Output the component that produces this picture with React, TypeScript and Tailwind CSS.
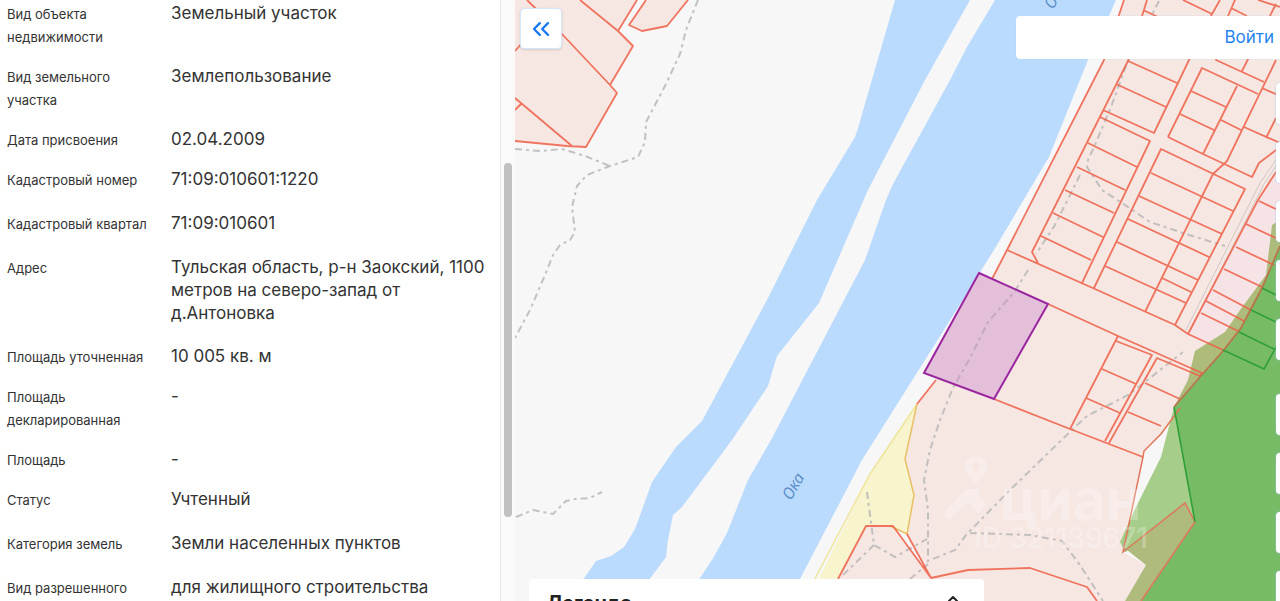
import { useState } from "react";
import { ChevronUp, ChevronsLeft } from "lucide-react";

interface Attribute {
  label: string;
  value: string;
  copyable?: boolean;
}

const attributes: Attribute[] = [
  { label: "Вид объекта недвижимости", value: "Земельный участок" },
  { label: "Вид земельного участка", value: "Землепользование" },
  { label: "Дата присвоения", value: "02.04.2009" },
  { label: "Кадастровый номер", value: "71:09:010601:1220", copyable: true },
  { label: "Кадастровый квартал", value: "71:09:010601", copyable: true },
  { label: "Адрес", value: "Тульская область, р-н Заокский, 1100 метров на северо-запад от д.Антоновка", copyable: true },
  { label: "Площадь уточненная", value: "10 005 кв. м" },
  { label: "Площадь декларированная", value: "-" },
  { label: "Площадь", value: "-" },
  { label: "Статус", value: "Учтенный", copyable: true },
  { label: "Категория земель", value: "Земли населенных пунктов", copyable: true },
  { label: "Вид разрешенного использования", value: "для жилищного строительства" },
];

const tools = ["Поиск", "Слои", "Измерения", "Координаты", "Приблизить", "Отдалить", "Местоположение", "Печать", "Справка"];

// Parcel borders, one "M…" run per line
const parcelLines = [
  // shore and left strip
  "M1124 0 L1104 60 L1007 250 L992 279",
  "M1147 0 L1128 61 L1032 252 L1038 263",
  "M1143 10 L1158 17 M1183 0 L1212 14 L1220 0 M1212 14 L1189 60 L1154 133 L1103 110",
  "M1128 61 L1177 83 M1116 84 L1166 107",
  "M1100 117 L1150 141 L1082 283",
  "M1088 143 L1137 167 M1077 167 L1125 190 M1065 190 L1114 213 M1053 213 L1103 237 M1041 236 L1091 260",
  // block north-east
  "M1235 0 L1228 16 L1216 60 L1264 82 M1231 8 L1247 16 M1258 0 L1280 7 M1276 4 L1242 71",
  "M1168 137 L1202 68 L1258 94 M1191 91 L1226 107 M1180 114 L1214 130",
  "M1168 137 L1203 154 L1252 177 L1259 163 L1280 147",
  "M1237 86 L1203 154 M1276 60 L1227 161 L1213 174 M1221 120 L1241 130 M1262 88 L1280 96 M1244 127 L1280 143 M1276 118 L1266 138",
  // middle block
  "M1094 288 L1161 149 L1245 189 L1175 325 M1213 174 L1145 312",
  "M1151 173 L1233 211 M1139 196 L1222 234 M1128 219 L1209 257 M1117 242 L1198 280 M1105 266 L1186 303 M1162 278 L1191 292",
  // plots along the road
  "M1276 172 L1258 200 L1188 334",
  "M1259 201 L1280 211 M1246 224 L1280 240 M1236 247 L1274 265 M1224 269 L1262 287 M1213 290 L1251 310 M1206 301 L1244 321 M1201 313 L1238 331",
  "M1007 250 L1095 289 L1175 325 L1188 334 L1223 350",
  // south group
  "M1048 304 L1118 336 L1202 373 L1200 376 L1157 358 L1109 443 M1118 336 L1070 429 M1116 341 L1152 355 L1105 441",
  "M1102 369 L1136 384 M1086 398 L1120 413 M1145 383 L1180 399 M1128 412 L1161 426",
  "M994 399 L1070 429 L1143 457",
];

const trails = [
  "M698 0 L686 30 L680 54 L666 84 L655 105 L646 122 L645 142 L638 157 L610 166 L587 175 L577 186 L572 207 L575 232 L570 240 L560 245 L553 255 L545 275 L530 310 L515 338",
  "M515 149 L540 151 L562 149 L585 156 L610 166",
  "M516 517 L533 510 L553 514 L566 501 L575 499 L590 498 L602 492",
  "M1159 1 L1127 63 L1111 107 L1095 145 L1088 160 L1087 167 L1102 190 L1125 205 L1150 222 L1186 234 L1225 246",
  "M1080 175 L1055 225 L1036 254",
  "M1028 270 L1015 291 L988 322 L970 358 L953 388 L940 420 L930 450 L924 480 L928 510 L928 561 L955 550 L966 535 L1010 490 L1075 427 L1087 416 L1128 395 L1150 378 L1183 352",
  "M970 533 L1030 535 L1062 541 L1080 565 L1103 601",
  "M867 492 L872 530 L874 545 L895 557 L927 539 M874 545 L843 575 M910 579 L928 564",
];

function CadastralMap() {
  return (
    <svg
      className="absolute inset-0 h-full w-full"
      viewBox="515 0 765 601"
      preserveAspectRatio="xMinYMin slice"
      role="img"
      aria-label="Кадастровая карта"
    >
      {/* River */}
      <g fill="#bbdbfe">
        <path d="M895 0 H970 L925 80 L868 190 L819 303 L777 356 L768 386 L732 440 L682 507 L673 515 L668 540 L666 557 L646 584 H580 L596 561 L611 556 L624 547 L635 529 L652 482 L676 447 L702 421 L768 298 L817 200 L855 137 L858 128 Z" />
        <path d="M995 0 H1116 L1108 18 L1088 60 L1049 157 L994 250 L937 341 L862 460 L800 579 L797 584 H696 L712 560 L727 533 L748 480 L771 440 L865 260 L886 200 L893 184 L950 80 L967 47 Z" />
      </g>

      {/* Settlement land */}
      <g fill="#f6e7e3">
        <path d="M1124 0 H1280 V340 L1180 408 L1161 434 L1144 451 L1143 457 L1123 552 L1146 565 L1125 601 H915 L931 578 L907 534 L914 495 L905 459 L917 404 L936 380 L1007 250 L1104 60 Z" />
        <path d="M826 601 L866 526 H893 L931 578 L925 601 Z" />
        <path d="M515 0 H637 L618 31 L633 46 L610 85 L617 93 L586 147 L515 141 Z" />
        <path d="M646 0 L629 25 L642 31 L667 26 L688 0 Z" />
        <path d="M979 273 L1048 304 L994 399 L924 373 Z" />
      </g>
      <path d="M1258 200 L1280 168 V240 L1262 288 L1223 350 L1188 334 Z" fill="#f6e3e5" />

      {/* Forest */}
      <path d="M1280 220 L1272 225 L1266 275 L1240 310 L1225 332 L1195 351 L1188 380 L1174 407 L1280 380 Z" fill="#adbc7b" />
      <path d="M1174 407 L1161 457 L1135 509 L1120 542 L1125 552 L1195 524 Z" fill="#a7cd8a" />
      <path d="M1127 550 L1185 503 L1195 522 L1141 601 H1125 L1146 565 Z" fill="#aebb7c" />
      <path d="M1280 246 L1262 288 L1241 328 L1223 351 L1200 377 L1174 407 L1195 522 L1141 601 H1280 Z" fill="#78bb67" />

      {/* Meadow */}
      <path d="M917 404 L905 459 L914 495 L907 534 L890 526 H866 L838 579 V601 H808 L870 474 Z" fill="#f7f4ce" />
      <path d="M917 404 L870 474 L808 592" fill="none" stroke="#efe59b" strokeWidth="1.5" />
      <path d="M917 404 L905 459 L914 495 L907 534 L890 526" fill="none" stroke="#e9c066" strokeWidth="1.5" />

      {/* Road */}
      <path d="M1280 154 L1260 183 L1186 330 M1280 160 L1264 184 L1190 331" fill="none" stroke="#cfc8c6" strokeWidth="1" />

      <path d={trails.join(" ")} fill="none" stroke="#bdbaba" strokeOpacity="0.9" strokeWidth="2" strokeDasharray="7 4 3 4" />

      <g fill="none" stroke="#ee5e46" strokeOpacity="0.85" strokeWidth="1.8" strokeLinejoin="round">
        <path d={parcelLines.join(" ")} />
        <path d="M527 0 L561 33 L610 85 L617 93 L586 147 L567 146 L515 141 M580 0 L618 31 L633 46 L610 85 M637 0 L618 31 M646 0 L629 25 L642 31 L667 26 L688 0 M515 98 L572 146 M515 110 L521 104 M515 51 L530 34" />
        <path d="M838 579 L866 526 H893 L931 578 L907 534 M931 578 L968 570 L1030 568 L1087 587 L1097 601 M936 380 L917 404" />
      </g>
      <path d="M1180 408 L1161 434 L1144 451 L1143 457 L1123 552 L1185 503 L1195 522 L1141 601" fill="none" stroke="#e0765a" strokeWidth="1.5" />
      <path d="M1280 246 L1262 288 L1241 328 L1223 351 L1200 377 L1174 407" fill="none" stroke="#b9744c" strokeWidth="1.8" />
      <path d="M1262 288 L1280 297 M1251 310 L1280 324 M1239 332 L1274 349 M1223 350 L1264 369 L1280 340 M1174 407 L1195 522" fill="none" stroke="#2f9f38" strokeWidth="1.6" />

      {/* Selected parcel */}
      <path d="M979 273 L1048 304 L994 399 L924 373 Z" fill="#c887cb" fillOpacity="0.42" stroke="#9a259f" strokeWidth="2" />

      <g fill="#608fc8" fontFamily="Noto Sans, sans-serif" fontStyle="italic" fontSize="16">
        <text transform="translate(791 501) rotate(-60)">Ока</text>
        <text transform="translate(1053 10) rotate(-60)">Ока</text>
      </g>

      {/* Watermark */}
      <g fill="#fff" opacity="0.25">
        <path fillRule="evenodd" d="M976 456 a11 11 0 0 1 11 11 q0 7 -11 16 q-11 -9 -11 -16 a11 11 0 0 1 11 -11 Z M976 463 a4 4 0 1 0 0.1 0 Z" />
        <path d="M942 514 L966 489 H979 V497 L986 504 L979 514 L968 502 L949 520 Z" />
        <text x="1000" y="520" fontFamily="Inter, sans-serif" fontWeight="700" fontSize="57">циан</text>
        <text x="974" y="548" fontFamily="Inter, sans-serif" fontWeight="500" fontSize="28">ID 321139671</text>
      </g>
    </svg>
  );
}

function AttributeRow({ label, value, copyable }: Attribute) {
  return (
    <div className={`flex leading-[23px] ${copyable ? "pb-5" : "pb-4"}`}>
      <dt className="w-[164px] shrink-0 pr-5 pt-px text-[13px]">{label}</dt>
      <dd className="flex-1 text-[17px]">{value}</dd>
    </div>
  );
}

export default function App() {
  const [legendOpen, setLegendOpen] = useState(false);

  return (
    <div className="flex h-screen overflow-hidden bg-white font-['Inter',sans-serif] text-[#333]">
      {/* Object card */}
      <aside className="flex w-[515px] shrink-0">
        <dl className="flex-1 pl-[7px] pr-2 pt-0.5">
          {attributes.map((item) => (
            <AttributeRow key={item.label} {...item} />
          ))}
        </dl>
        <div className="w-[15px] shrink-0 border-l border-gray-200 bg-[#fafafa] px-[3px] pt-[163px]">
          <div className="h-[354px] w-2 rounded-full bg-[#c1c1c1]" />
        </div>
      </aside>

      {/* Map */}
      <main className="relative flex-1 overflow-hidden bg-[#f7f7f7]">
        <CadastralMap />

        <button
          type="button"
          aria-label="Свернуть панель"
          className="absolute left-[5px] top-2 flex h-[41px] w-[42px] items-center justify-center rounded border border-[#d3e6fa] bg-white text-[#1a7af0] shadow"
        >
          <ChevronsLeft className="h-7 w-7" />
        </button>

        <div className="absolute right-0 top-4 flex h-[43px] w-[264px] items-center justify-end rounded-l bg-white pr-1.5 shadow-[0_0_1px_#9cc8f5]">
          <a href="#login" className="text-[17px] text-[#2583ee]">Войти</a>
        </div>

        {/* Toolbar, slid past the edge */}
        <div className="absolute left-full top-[83px] -ml-1 flex flex-col gap-[18px]">
          {tools.map((tool) => (
            <button
              key={tool}
              type="button"
              aria-label={tool}
              className="h-[41px] w-[41px] rounded bg-white shadow-[0_0_2px_#9cc8f5] nth-6:mt-4"
            />
          ))}
        </div>

        <button
          type="button"
          aria-expanded={legendOpen}
          onClick={() => setLegendOpen(!legendOpen)}
          className="absolute bottom-0 left-3.5 flex h-[22px] w-[455px] items-start justify-between overflow-hidden rounded-t bg-white pl-[18px] pr-[23px] pt-3 text-xl leading-6 font-bold text-[#222]"
        >
          Легенда
          <ChevronUp className={`h-4 w-4 shrink-0 ${legendOpen ? "rotate-180" : ""}`} strokeWidth={3} />
        </button>
      </main>
    </div>
  );
}
